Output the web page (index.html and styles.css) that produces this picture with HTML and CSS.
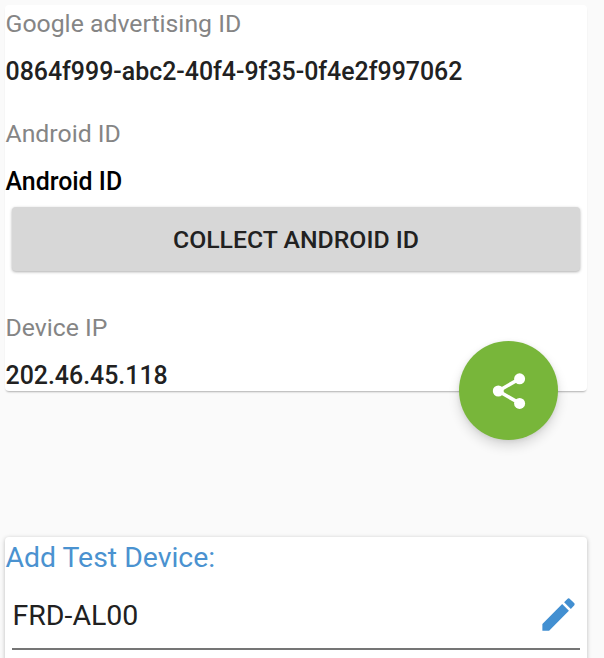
FILE: index.html
```
<!DOCTYPE html>
<html lang="en">
<head>
<meta charset="utf-8">
<title>Device information</title>
<link rel="stylesheet" href="styles.css">
</head>
<body>
<main class="screen">
  <section class="card card-ids">
    <div class="field">
      <div class="label">Google advertising ID</div>
      <div class="value">0864f999-abc2-40f4-9f35-0f4e2f997062</div>
    </div>
    <div class="field">
      <div class="label">Android ID</div>
      <div class="value strong">Android ID</div>
    </div>
    <button class="collect" type="button">COLLECT ANDROID ID</button>
    <div class="field">
      <div class="label">Device IP</div>
      <div class="value">202.46.45.118</div>
    </div>
    <button class="fab" type="button" aria-label="Share">
      <svg width="44" height="44" viewBox="0 0 44 44" fill="#fff" stroke="#fff">
        <path d="M32.7 9.7 11.3 22 32.7 34.3" fill="none" stroke-width="3.6"/>
        <circle cx="32.6" cy="9.8" r="5.5" stroke="none"/>
        <circle cx="11.3" cy="22" r="5.5" stroke="none"/>
        <circle cx="32.6" cy="34.4" r="5.5" stroke="none"/>
      </svg>
    </button>
  </section>
  <section class="card card-test">
    <h2 class="heading">Add Test Device:</h2>
    <div class="device">
      <span class="device-name">FRD-AL00</span>
      <svg width="43" height="43" viewBox="0 0 24 24" fill="#428fd1">
        <path d="M3 17.25V21h3.75L17.81 9.94l-3.75-3.75L3 17.25zM20.71 7.04c.39-.39.39-1.02 0-1.41l-2.34-2.34c-.39-.39-1.02-.39-1.41 0l-1.83 1.83 3.75 3.75 1.83-1.83z"/>
      </svg>
    </div>
  </section>
</main>
</body>
</html>
```
FILE: styles.css
```
* { box-sizing: border-box; }
body {
  margin: 0;
  background: #fafafa;
  font-family: Roboto, sans-serif;
  font-size: 24.9px;
  line-height: 30px;
  color: #212121;
}
.screen {
  height: 658px;
  padding: 5px 17px 0 5px;
  overflow: hidden;
}
.card {
  background: #fff;
  border-radius: 4px;
}
.card-ids {
  position: relative;
  height: 386px;
  padding-top: 4px;
  box-shadow: 0 2px 2px -1px rgba(0, 0, 0, .3);
}
.field {
  height: 110px;
  padding-left: .5px;
}
.label {
  height: 48px;
  font-size: 24.8px;
  color: #858585;
}
.value { font-weight: 500; }
.strong { color: #000; }
.collect {
  display: flex;
  align-items: center;
  justify-content: center;
  width: 568px;
  height: 64px;
  margin: -22px 0 42px 7px;
  padding: 1px 0 0;
  border: 0;
  border-radius: 4px;
  background: #d7d7d7;
  box-shadow: 0 1px 3px rgba(0, 0, 0, .32);
  color: #212121;
  font: 500 24.8px/30px Roboto, sans-serif;
}
.fab {
  position: absolute;
  right: 29px;
  bottom: -49px;
  display: flex;
  align-items: center;
  justify-content: center;
  width: 99px;
  height: 99px;
  padding: 0;
  border: 0;
  border-radius: 50%;
  background: #78b63a;
  box-shadow: 0 6px 12px rgba(0, 0, 0, .14), 0 1px 4px rgba(0, 0, 0, .08);
}
.card-test {
  height: 140px;
  margin-top: 146px;
  padding-top: 4px;
  box-shadow: 0 1px 4px rgba(0, 0, 0, .25);
}
.heading {
  margin: 0;
  padding-left: .5px;
  font-size: 28.4px;
  line-height: 34px;
  font-weight: 400;
  color: #4a92d0;
}
.device {
  display: flex;
  align-items: center;
  justify-content: space-between;
  height: 75px;
  margin: 0 7px;
  padding: 5px 0 0 .5px;
  border-bottom: 2px solid #757575;
  font-size: 28.5px;
}
.device-name { padding-top: 4px; }
```
